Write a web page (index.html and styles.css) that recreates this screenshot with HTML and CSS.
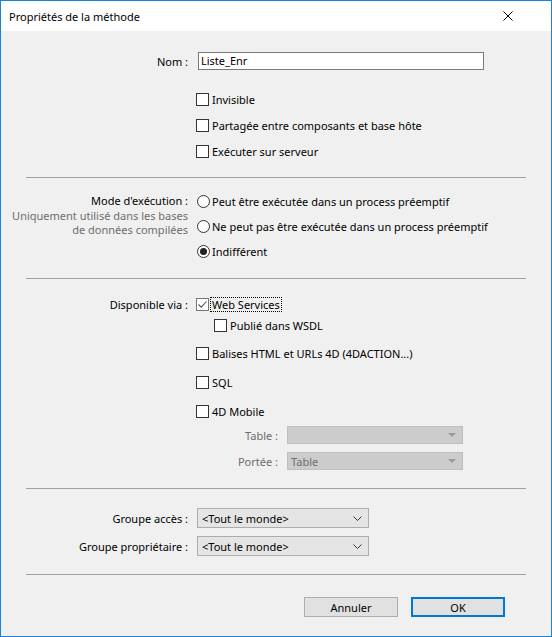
FILE: index.html
```html
<!DOCTYPE html>
<html lang="fr">
<head>
<meta charset="utf-8">
<title>Propriétés de la méthode</title>
<link rel="stylesheet" href="styles.css">
</head>
<body>
<div class="window">
  <div class="titlebar">
    <span class="title">Propriétés de la méthode</span>
    <svg class="close" width="10" height="10" viewBox="0 0 10 10"><path d="M0.5 0.5 L9.5 9.5 M9.5 0.5 L0.5 9.5" stroke="#000" stroke-width="1" fill="none"/></svg>
  </div>
  <div class="content">
    <div class="row r-nom">
      <span class="lbl">Nom :</span>
      <div class="text-input">Liste_Enr</div>
    </div>

    <div class="checks">
      <div class="row r26"><span class="lbl"></span><span class="cb"></span><span>Invisible</span></div>
      <div class="row r26"><span class="lbl"></span><span class="cb"></span><span>Partagée entre composants et base hôte</span></div>
      <div class="row r26"><span class="lbl"></span><span class="cb"></span><span>Exécuter sur serveur</span></div>
    </div>

    <div class="sep s-a"></div>

    <div class="mode">
      <div class="lblcol">
        <div class="lbl-main">Mode d'exécution :</div>
        <div class="note">Uniquement utilisé dans les bases<br>de données compilées</div>
      </div>
      <div class="radios">
        <div class="row r25"><span class="radio"></span><span>Peut être exécutée dans un process préemptif</span></div>
        <div class="row r25"><span class="radio"></span><span>Ne peut pas être exécutée dans un process préemptif</span></div>
        <div class="row r25"><span class="radio on"></span><span>Indifférent</span></div>
      </div>
    </div>

    <div class="sep s-b"></div>

    <div class="row r20 mt15"><span class="lbl">Disponible via :</span><span class="cb checked"><svg width="11" height="11" viewBox="0 0 11 11"><path d="M1.5 5.5 L4.2 8.2 L9.5 2.5" stroke="#555" stroke-width="1.1" fill="none"/></svg></span><span class="focus">Web Services</span></div>
    <div class="row r20 mt1"><span class="lbl"></span><span class="cb indent"></span><span>Publié dans WSDL</span></div>
    <div class="row r20 mt8"><span class="lbl"></span><span class="cb"></span><span>Balises HTML et URLs 4D (4DACTION...)</span></div>
    <div class="row r20 mt9"><span class="lbl"></span><span class="cb"></span><span>SQL</span></div>
    <div class="row r20 mt9"><span class="lbl"></span><span class="cb"></span><span>4D Mobile</span></div>
    <div class="row r18 mt5"><span class="lbl"></span><span class="sublbl">Table :</span><div class="dsel"><span></span><span class="tri"></span></div></div>
    <div class="row r18 mt8"><span class="lbl"></span><span class="sublbl">Portée :</span><div class="dsel"><span>Table</span><span class="tri"></span></div></div>

    <div class="sep s-c"></div>

    <div class="row r20 mt19"><span class="lbl">Groupe accès :</span><div class="combo"><span>&lt;Tout le monde&gt;</span><svg width="9" height="5" viewBox="0 0 9 5"><path d="M0.5 0.5 L4.5 4.5 L8.5 0.5" stroke="#333" stroke-width="1" fill="none"/></svg></div></div>
    <div class="row r20 mt8"><span class="lbl">Groupe propriétaire :</span><div class="combo"><span>&lt;Tout le monde&gt;</span><svg width="9" height="5" viewBox="0 0 9 5"><path d="M0.5 0.5 L4.5 4.5 L8.5 0.5" stroke="#333" stroke-width="1" fill="none"/></svg></div></div>

    <div class="sep s-c"></div>

    <div class="buttons">
      <div class="btn">Annuler</div>
      <div class="btn default">OK</div>
    </div>
  </div>
</div>
</body>
</html>
```

FILE: styles.css
```css
* { box-sizing: border-box; }
html, body { margin: 0; padding: 0; }
body {
  font-family: "Noto Sans", "Open Sans", sans-serif;
  font-size: 11px;
  color: #000;
  background: #fff;
}
.window {
  width: 552px;
  height: 637px;
  border: 1px solid #1883d7;
  background: #f0f0f0;
  display: flex;
  flex-direction: column;
}
.titlebar {
  height: 30px;
  background: #fff;
  display: flex;
  align-items: center;
  justify-content: space-between;
  padding: 0 38px 0 8px;
  flex: none;
}
.title { font-size: 11px; }
.close { display: block; }
.content { padding-top: 21px; }
.row { display: flex; align-items: center; white-space: nowrap; }
.lbl {
  width: 187px;
  margin-right: 8px;
  text-align: right;
  flex: none;
  white-space: nowrap;
}
.r-nom { height: 18px; }
.text-input {
  margin-left: 2px;
  width: 286px;
  height: 18px;
  border: 1px solid #7a7a7a;
  background: #fff;
  padding-left: 2px;
  line-height: 16px;
}
.checks { margin-top: 16px; }
.r26 { height: 26px; }
.r25 { height: 25px; }
.r20 { height: 20px; }
.r18 { height: 18px; }
.mt1 { margin-top: 1px; }
.mt5 { margin-top: 5px; }
.mt8 { margin-top: 8px; }
.mt9 { margin-top: 9px; }
.mt15 { margin-top: 15px; }
.mt19 { margin-top: 19px; }
.cb {
  width: 13px;
  height: 13px;
  border: 1px solid #333;
  background: #fff;
  flex: none;
  margin-right: 3px;
  display: flex;
  align-items: center;
  justify-content: center;
}
.cb.checked { border-color: #777; margin-right: 2px; }
.cb.checked svg { display: block; }
.cb.indent { margin-left: 18px; }
.focus { outline: 1px dotted #000; padding: 0 1px; line-height: 13px; }
.sep {
  height: 1px;
  background: #a0a0a0;
  margin: 0 25px;
}
.s-a { margin-top: 13px; }
.s-b { margin-top: 14px; }
.s-c { margin-top: 18px; }
.mode { display: flex; margin-top: 11px; }
.lblcol {
  width: 187px;
  margin-right: 9px;
  text-align: right;
  padding-top: 4px;
  flex: none;
  white-space: nowrap;
}
.lbl-main { line-height: 16px; }
.note { line-height: 14px; color: #6d6d6d; }
.radio {
  width: 13px;
  height: 13px;
  border: 1px solid #333;
  border-radius: 50%;
  background: #fff;
  flex: none;
  margin-right: 2px;
  display: flex;
  align-items: center;
  justify-content: center;
}
.radio.on::after {
  content: "";
  width: 7px;
  height: 7px;
  border-radius: 50%;
  background: #222;
}
.sublbl {
  width: 82px;
  margin-right: 9px;
  text-align: right;
  color: #6d6d6d;
  flex: none;
}
.dsel {
  width: 176px;
  height: 18px;
  background: #cccccc;
  border: 1px solid #bfbfbf;
  display: flex;
  align-items: center;
  justify-content: space-between;
  padding: 0 6px 0 3px;
  color: #6d6d6d;
}
.tri {
  width: 0;
  height: 0;
  border-left: 4px solid transparent;
  border-right: 4px solid transparent;
  border-top: 4px solid #9a9a9a;
}
.combo {
  margin-left: 1px;
  width: 172px;
  height: 20px;
  background: #e5e5e5;
  border: 1px solid #acacac;
  display: flex;
  align-items: center;
  justify-content: space-between;
  padding: 0 6px 0 4px;
}
.combo svg { display: block; }
.buttons {
  display: flex;
  justify-content: flex-end;
  gap: 13px;
  margin-top: 22px;
  padding-right: 46px;
}
.btn {
  width: 94px;
  height: 20px;
  border: 1px solid #adadad;
  background: #e1e1e1;
  display: flex;
  align-items: center;
  justify-content: center;
}
.btn.default { border: 2px solid #0078d7; }
```
